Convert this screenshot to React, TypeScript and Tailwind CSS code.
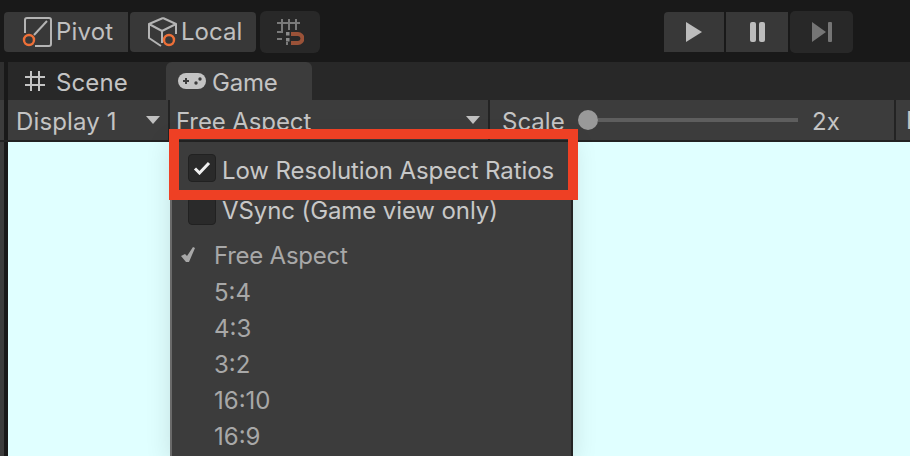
const font = { fontFamily: "Inter, 'Noto Sans', sans-serif" };

const PivotIcon = () => (
  <svg width="30" height="30" viewBox="0 0 30 30" fill="none">
    <path d="M3 16V3a2 2 0 0 1 2-2h22a2 2 0 0 1 2 2v24a2 2 0 0 1-2 2H13" stroke="#b4b4b4" strokeWidth="2" />
    <path d="M12 18L25 4" stroke="#b4b4b4" strokeWidth="2" />
    <circle cx="7" cy="23" r="5" stroke="#ee7038" strokeWidth="2.4" />
  </svg>
);

const LocalIcon = () => (
  <svg width="32" height="30" viewBox="0 0 32 30" fill="none">
    <path d="M16 1L2 7v14l12 8M16 1l13 6v10M2 7l13 7 14-7M15 14v12" stroke="#b4b4b4" strokeWidth="2" strokeLinejoin="round" />
    <circle cx="22" cy="23" r="5" stroke="#ee7038" strokeWidth="2.4" />
  </svg>
);

const SnapIcon = () => (
  <svg width="28" height="28" viewBox="0 0 28 28" fill="none">
    <path d="M1 5h23M6 1v14M13 1v11M20 1v11M1 14h6M1 21h5M11 24v3" stroke="#7a7a7a" strokeWidth="2" />
    <rect x="10" y="14" width="3.5" height="3.5" fill="#8a8a8a" />
    <rect x="10" y="20" width="3.5" height="3.5" fill="#8a8a8a" />
    <path d="M15 14h7a6.5 6.5 0 0 1 0 13h-7v-4h7a2.5 2.5 0 0 0 0-5h-7z" fill="#9a5238" />
  </svg>
);

const GridIcon = () => (
  <svg width="20" height="20" viewBox="0 0 20 20" fill="none" stroke="#c4c4c4" strokeWidth="2">
    <path d="M0 6h20M0 14h20M6 0v20M14 0v20" />
  </svg>
);

const GamepadIcon = () => (
  <svg width="28" height="16" viewBox="0 0 28 16">
    <rect x="0" y="0" width="28" height="16" rx="8" fill="#c4c4c4" />
    <path d="M5 8h6M8 5v6" stroke="#3c3c3c" strokeWidth="2" />
    <circle cx="18" cy="10" r="1.7" fill="#3c3c3c" />
    <circle cx="22" cy="6" r="1.7" fill="#3c3c3c" />
  </svg>
);

const Arrow = () => (
  <div className="w-0 h-0 border-l-[7px] border-r-[7px] border-t-[8px] border-l-transparent border-r-transparent border-t-[#c0c0c0]" />
);

const Checkbox = ({ checked }: { checked?: boolean }) => (
  <div className="w-[28px] h-[28px] rounded-[4px] bg-[#2a2a2a] border border-[#212121] flex items-center justify-center shrink-0">
    {checked && (
      <svg width="18" height="14" viewBox="0 0 18 14" fill="none">
        <path d="M2 7.5L6.5 12L16 2" stroke="#f0f0f0" strokeWidth="3" />
      </svg>
    )}
  </div>
);

const ratios = ["5:4", "4:3", "3:2", "16:10", "16:9"];

export default function App() {
  return (
    <div className="relative w-[910px] h-[456px] overflow-hidden bg-[#191919] flex flex-col text-[#c4c4c4] text-[24px]" style={font}>
      {/* Main toolbar */}
      <div className="h-[62px] shrink-0 flex items-center pl-[4px] pt-[2px]">
        <div className="w-[124px] h-[40px] bg-[#383838] rounded-l-[4px] flex items-center pl-[18px] gap-[4px] text-[#c0c0c0]">
          <PivotIcon />
          <span className="tracking-[0.2px]">Pivot</span>
        </div>
        <div className="ml-[2px] w-[126px] h-[40px] bg-[#383838] rounded-[4px] flex items-center pl-[17px] gap-[2px] text-[#c0c0c0]">
          <LocalIcon />
          <span>Local</span>
        </div>
        <div className="ml-[4px] w-[60px] h-[42px] bg-[#282828] rounded-[6px] flex items-center justify-center">
          <SnapIcon />
        </div>
        <div className="ml-[344px] w-[60px] h-[40px] bg-[#383838] rounded-tl-[4px] flex items-center justify-center">
          <svg width="18" height="22" viewBox="0 0 18 22">
            <path d="M1 1L17 11L1 21z" fill="#bcbcbc" />
          </svg>
        </div>
        <div className="ml-[2px] w-[62px] h-[40px] bg-[#383838] flex items-center justify-center gap-[3px]">
          <div className="w-[6px] h-[20px] rounded-[2px] bg-[#bcbcbc]" />
          <div className="w-[6px] h-[20px] rounded-[2px] bg-[#bcbcbc]" />
        </div>
        <div className="ml-[2px] w-[63px] h-[42px] bg-[#282828] rounded-[5px] flex items-center justify-center">
          <svg width="22" height="20" viewBox="0 0 22 20">
            <path d="M1 0L15 10L1 20z" fill="#757575" />
            <rect x="17" y="0" width="4" height="20" rx="1" fill="#757575" />
          </svg>
        </div>
      </div>

      {/* Tab strip */}
      <div className="h-[38px] shrink-0 flex bg-[#282828]">
        <div className="w-[4px] bg-[#2f2f2f]" />
        <div className="w-[4px] bg-[#191919]" />
        <div className="w-[158px] flex items-center pl-[17px] gap-[11px]">
          <GridIcon />
          <span className="pt-[3px] tracking-[0.1px]">Scene</span>
        </div>
        <div className="w-[146px] bg-[#3c3c3c] rounded-t-[6px] flex items-center pl-[12px] gap-[6px]">
          <GamepadIcon />
          <span className="pt-[3px] tracking-[-0.2px]">Game</span>
        </div>
      </div>

      {/* Game view toolbar */}
      <div className="h-[40px] shrink-0 flex bg-[#3c3c3c]">
        <div className="w-[4px]" />
        <div className="w-[4px] bg-[#191919]" />
        <div className="w-[160px] flex items-center justify-between pl-[8px] pr-[8px]">
          <span className="pt-[3px] tracking-[0.15px]">Display 1</span>
          <Arrow />
        </div>
        <div className="w-[2px] bg-[#232323]" />
        <div className="w-[318px] flex items-center justify-between pl-[6px] pr-[8px]">
          <span className="pt-[3px] tracking-[-0.1px]">Free Aspect</span>
          <Arrow />
        </div>
        <div className="w-[2px] bg-[#232323]" />
        <div className="w-[404px] flex items-center pl-[12px]">
          <span className="pt-[3px] w-[76px]">Scale</span>
          <div className="w-[20px] h-[20px] rounded-full bg-[#999999] shrink-0" />
          <div className="w-[200px] h-[4px] bg-[#5e5e5e]" />
          <span className="pt-[3px] ml-[14px]">2x</span>
        </div>
        <div className="w-[2px] bg-[#232323]" />
        <div className="flex-1 overflow-hidden pl-[10px] pt-[3px]">M</div>
      </div>

      {/* Game view */}
      <div className="flex-1 flex border-t-2 border-[#232323] bg-[#3c3c3c]">
        <div className="w-[4px]" />
        <div className="w-[4px] bg-[#191919]" />
        <div className="flex-1 bg-[#e0ffff]" />
      </div>

      {/* Aspect dropdown */}
      <div className="absolute left-[170px] top-[142px] w-[403px] h-[320px] bg-[#3c3c3c] border-x-2 border-l-[#6a6a6a] border-r-[#232323] shadow-[0_0_24px_rgba(0,0,0,0.12)]">
        <div className="h-[96px] flex flex-col pt-[12px] pl-[16px] gap-[15px] text-[#c8c8c8]">
          <div className="flex items-center gap-[6px] h-[28px]">
            <Checkbox checked />
            <span className="pt-[5px] tracking-[-0.1px]">Low Resolution Aspect Ratios</span>
          </div>
          <div className="flex items-center gap-[6px] h-[28px]">
            <Checkbox />
            <span className="tracking-[-0.1px]">VSync (Game view only)</span>
          </div>
        </div>
        <div className="flex flex-col text-[#a8a8a8]">
          <div className="h-[36px] flex items-center relative pl-[42px]">
            <svg className="absolute left-[8px] top-[9px]" width="16" height="16" viewBox="0 0 16 16">
              <path d="M1 9L5 7L7 9L13 0L15 1L9 15H6z" fill="#a8a8a8" />
            </svg>
            <span className="tracking-[-0.25px]">Free Aspect</span>
          </div>
          {ratios.map((r) => (
            <div key={r} className="h-[36px] flex items-center pl-[42px] pt-[1px]">
              {r}
            </div>
          ))}
        </div>
      </div>

      {/* Red annotation box */}
      <div className="absolute left-[169px] top-[129px] w-[409px] h-[71px] border-[10px] border-[#ee4024]" />
    </div>
  );
}
